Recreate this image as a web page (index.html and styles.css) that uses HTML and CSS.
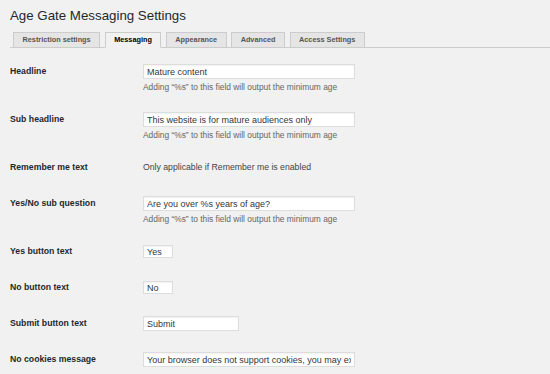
FILE: index.html
```html
<!DOCTYPE html>
<html lang="en">
<head>
<meta charset="utf-8">
<title>Age Gate Messaging Settings</title>
<link rel="stylesheet" href="styles.css">
</head>
<body>
<div class="wrap">
  <h1 class="page-title">Age Gate Messaging Settings</h1>
  <nav class="tabs">
    <a class="tab">Restriction settings</a>
    <a class="tab active">Messaging</a>
    <a class="tab">Appearance</a>
    <a class="tab">Advanced</a>
    <a class="tab">Access Settings</a>
  </nav>
  <form class="form">
    <div class="row">
      <label class="label">Headline</label>
      <div class="field">
        <div class="control"><input class="input wide" type="text" value="Mature content"></div>
        <p class="help">Adding “%s” to this field will output the minimum age</p>
      </div>
    </div>
    <div class="row">
      <label class="label">Sub headline</label>
      <div class="field">
        <div class="control"><input class="input wide" type="text" value="This website is for mature audiences only"></div>
        <p class="help">Adding “%s” to this field will output the minimum age</p>
      </div>
    </div>
    <div class="row">
      <label class="label">Remember me text</label>
      <div class="field">
        <div class="control"><span class="note">Only applicable if Remember me is enabled</span></div>
      </div>
    </div>
    <div class="row">
      <label class="label">Yes/No sub question</label>
      <div class="field">
        <div class="control"><input class="input wide" type="text" value="Are you over %s years of age?"></div>
        <p class="help">Adding “%s” to this field will output the minimum age</p>
      </div>
    </div>
    <div class="row">
      <label class="label">Yes button text</label>
      <div class="field">
        <div class="control"><input class="input tiny" type="text" value="Yes"></div>
      </div>
    </div>
    <div class="row">
      <label class="label">No button text</label>
      <div class="field">
        <div class="control"><input class="input tiny" type="text" value="No"></div>
      </div>
    </div>
    <div class="row">
      <label class="label">Submit button text</label>
      <div class="field">
        <div class="control"><input class="input medium" type="text" value="Submit"></div>
      </div>
    </div>
    <div class="row">
      <label class="label">No cookies message</label>
      <div class="field">
        <div class="control"><input class="input wide" type="text" value="Your browser does not support cookies, you may experience problems entering this site"></div>
      </div>
    </div>
  </form>
</div>
</body>
</html>
```

FILE: styles.css
```css
html, body {
  margin: 0;
  padding: 0;
  background: #f1f1f1;
}

body {
  font-family: "Liberation Sans", Arial, sans-serif;
  color: #23282d;
}

.wrap {
  padding-left: 10px;
}

.page-title {
  margin: 7px 0 0;
  font-size: 13.3px;
  line-height: 18px;
  font-weight: normal;
  color: #23282d;
}

.tabs {
  display: flex;
  gap: 4.5px;
  margin-top: 7px;
  padding-left: 3px;
  border-bottom: 1px solid #cccccc;
}

.tab {
  display: block;
  padding: 0 8.5px;
  margin-bottom: -1px;
  border: 1px solid #cccccc;
  background: #e5e5e5;
  color: #555555;
  font-size: 7.3px;
  font-weight: bold;
  line-height: 14px;
  white-space: nowrap;
}

.tab.active {
  background: #f1f1f1;
  border-bottom-color: #f1f1f1;
  color: #000000;
}

.form {
  padding-top: 5.5px;
}

.row {
  display: flex;
  padding: 10.5px 0;
}

.label {
  width: 133px;
  flex: none;
  font-size: 8.7px;
  font-weight: bold;
  line-height: 15px;
  color: #23282d;
}

.field {
  display: flex;
  flex-direction: column;
}

.control {
  height: 15px;
  display: flex;
  align-items: center;
}

.input {
  box-sizing: border-box;
  margin: 0;
  padding: 0 3px;
  border: 1px solid #dddddd;
  background: #ffffff;
  box-shadow: inset 0 1px 2px rgba(0, 0, 0, 0.06);
  font-family: "Liberation Sans", Arial, sans-serif;
  font-size: 9px;
  color: #32373c;
  outline: none;
}

.input.wide {
  width: 212px;
  height: 15px;
}

.input.medium {
  width: 96px;
  height: 15px;
}

.input.tiny {
  width: 30px;
  height: 12.5px;
}

.note {
  font-size: 8.7px;
  line-height: 15px;
  color: #444444;
}

.help {
  margin: 4.5px 0 0;
  font-size: 8.4px;
  line-height: 7.5px;
  color: #666666;
  white-space: nowrap;
}
```
